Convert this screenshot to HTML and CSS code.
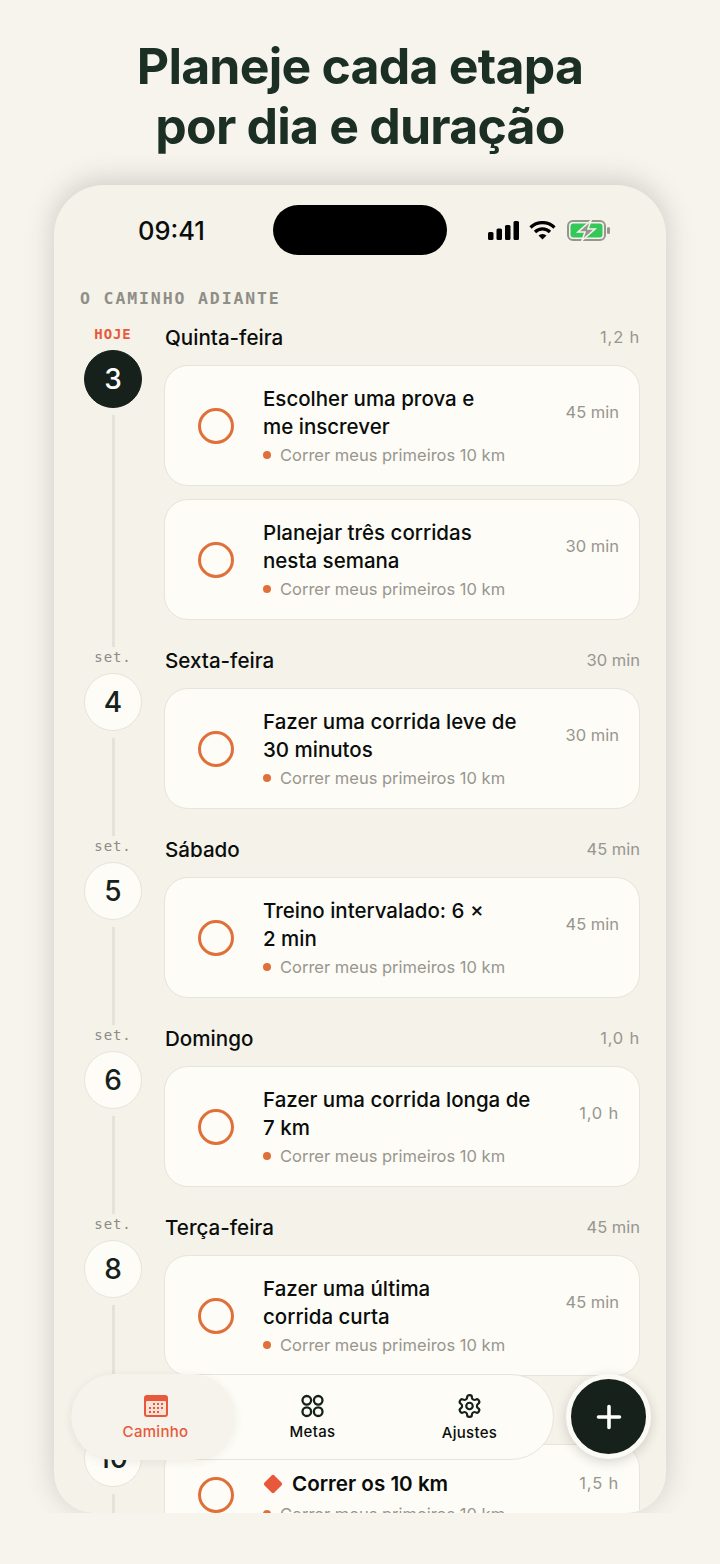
FILE: index.html
```html
<!DOCTYPE html>
<html lang="pt-BR">
<head>
    <meta charset="UTF-8">
    <meta name="viewport" content="width=device-width, initial-scale=1.0">
    <title>Planeje cada etapa</title>
    <link rel="stylesheet" href="styles.css">
</head>
<body>
    <h1 class="headline">Planeje cada etapa<br>por dia e duração</h1>

    <div class="phone">
        <div class="status-bar">
            <div class="status-time">09:41</div>
            <div class="island"></div>
            <div class="status-icons">
                <svg width="32" height="19" viewBox="0 0 32 19" fill="#000">
                    <rect x="0" y="11" width="5.500" height="8" rx="1.500"/>
                    <rect x="8.500" y="7.500" width="5.500" height="11.500" rx="1.500"/>
                    <rect x="17" y="4" width="5.500" height="15" rx="1.500"/>
                    <rect x="25.500" y="0" width="5.500" height="19" rx="1.500"/>
                </svg>
                <svg class="wifi" width="27" height="19" viewBox="0 0 27 19" fill="none" stroke="#000" stroke-width="3.200">
                    <path d="M1.500 6.500a17 17 0 0 1 24 0"/>
                    <path d="M6 11a10.600 10.600 0 0 1 15 0"/>
                    <path d="M13.500 18.600l-4-4a5.600 5.600 0 0 1 8 0z" fill="#000" stroke="none"/>
                </svg>
                <svg class="battery" width="44" height="21" viewBox="0 0 44 21">
                    <rect x="1" y="1" width="37" height="19" rx="5" fill="none" stroke="#97968e" stroke-width="2"/>
                    <rect x="3.500" y="3.500" width="32" height="14" rx="3" fill="#34c759"/>
                    <rect x="40" y="7" width="3" height="7" rx="1.500" fill="#97968e"/>
                    <path d="M24 0.500L11 12h7l-3 8.500L28 9h-7z" fill="#97968e" stroke="#f4f2e9" stroke-width="1.600"/>
                </svg>
            </div>
        </div>

        <div class="section-label">O CAMINHO ADIANTE</div>

        <div class="timeline">
            <div class="day">
                <div class="day-rail">
                    <div class="day-month today">HOJE</div>
                    <div class="day-number current">3</div>
                    <div class="rail-line"></div>
                </div>
                <div class="day-main">
                    <div class="day-head"><span class="day-name">Quinta-feira</span><span class="meta hours">1,2 h</span></div>
                    <div class="card">
                        <div class="check"></div>
                        <div class="card-body">
                            <div class="card-top"><div class="card-title">Escolher uma prova e<br>me inscrever</div><span class="meta card-time">45 min</span></div>
                            <div class="card-goal"><i class="goal-dot"></i>Correr meus primeiros 10 km</div>
                        </div>
                    </div>
                    <div class="card">
                        <div class="check"></div>
                        <div class="card-body">
                            <div class="card-top"><div class="card-title">Planejar três corridas<br>nesta semana</div><span class="meta card-time">30 min</span></div>
                            <div class="card-goal"><i class="goal-dot"></i>Correr meus primeiros 10 km</div>
                        </div>
                    </div>
                </div>
            </div>

            <div class="day">
                <div class="day-rail">
                    <div class="day-month">set.</div>
                    <div class="day-number">4</div>
                    <div class="rail-line"></div>
                </div>
                <div class="day-main">
                    <div class="day-head"><span class="day-name">Sexta-feira</span><span class="meta">30 min</span></div>
                    <div class="card">
                        <div class="check"></div>
                        <div class="card-body">
                            <div class="card-top"><div class="card-title">Fazer uma corrida leve de<br>30 minutos</div><span class="meta card-time">30 min</span></div>
                            <div class="card-goal"><i class="goal-dot"></i>Correr meus primeiros 10 km</div>
                        </div>
                    </div>
                </div>
            </div>

            <div class="day">
                <div class="day-rail">
                    <div class="day-month">set.</div>
                    <div class="day-number">5</div>
                    <div class="rail-line"></div>
                </div>
                <div class="day-main">
                    <div class="day-head"><span class="day-name">Sábado</span><span class="meta">45 min</span></div>
                    <div class="card">
                        <div class="check"></div>
                        <div class="card-body">
                            <div class="card-top"><div class="card-title">Treino intervalado: 6 ×<br>2 min</div><span class="meta card-time">45 min</span></div>
                            <div class="card-goal"><i class="goal-dot"></i>Correr meus primeiros 10 km</div>
                        </div>
                    </div>
                </div>
            </div>

            <div class="day">
                <div class="day-rail">
                    <div class="day-month">set.</div>
                    <div class="day-number">6</div>
                    <div class="rail-line"></div>
                </div>
                <div class="day-main">
                    <div class="day-head"><span class="day-name">Domingo</span><span class="meta hours">1,0 h</span></div>
                    <div class="card">
                        <div class="check"></div>
                        <div class="card-body">
                            <div class="card-top"><div class="card-title">Fazer uma corrida longa de<br>7 km</div><span class="meta card-time hours">1,0 h</span></div>
                            <div class="card-goal"><i class="goal-dot"></i>Correr meus primeiros 10 km</div>
                        </div>
                    </div>
                </div>
            </div>

            <div class="day">
                <div class="day-rail">
                    <div class="day-month">set.</div>
                    <div class="day-number">8</div>
                    <div class="rail-line"></div>
                </div>
                <div class="day-main">
                    <div class="day-head"><span class="day-name">Terça-feira</span><span class="meta">45 min</span></div>
                    <div class="card">
                        <div class="check"></div>
                        <div class="card-body">
                            <div class="card-top"><div class="card-title">Fazer uma última<br>corrida curta</div><span class="meta card-time">45 min</span></div>
                            <div class="card-goal"><i class="goal-dot"></i>Correr meus primeiros 10 km</div>
                        </div>
                    </div>
                </div>
            </div>

            <!-- month label and day head sit behind the tab bar -->
            <div class="day">
                <div class="day-rail">
                    <div class="day-month"></div>
                    <div class="day-number">10</div>
                    <div class="rail-line"></div>
                </div>
                <div class="day-main">
                    <div class="day-head"></div>
                    <div class="card card-milestone">
                        <div class="check"></div>
                        <div class="card-body">
                            <div class="card-top"><div class="card-title"><i class="diamond"></i>Correr os 10 km</div><span class="meta card-time hours">1,5 h</span></div>
                            <div class="card-goal"><i class="goal-dot"></i>Correr meus primeiros 10 km</div>
                        </div>
                    </div>
                </div>
            </div>
        </div>

        <nav class="tab-bar">
            <div class="tab active">
                <svg width="26" height="24" viewBox="0 0 26 24">
                    <rect x="1" y="1" width="24" height="22" rx="3" fill="#e8583a"/>
                    <rect x="3" y="7" width="20" height="14" rx="1" fill="#f8e3d8"/>
                    <g fill="#e8583a">
                        <rect x="10" y="9" width="2" height="2"/><rect x="14" y="9" width="2" height="2"/><rect x="18" y="9" width="2" height="2"/>
                        <rect x="6" y="13" width="2" height="2"/><rect x="10" y="13" width="2" height="2"/><rect x="14" y="13" width="2" height="2"/><rect x="18" y="13" width="2" height="2"/>
                        <rect x="6" y="17" width="2" height="2"/><rect x="10" y="17" width="2" height="2"/><rect x="14" y="17" width="2" height="2"/>
                    </g>
                </svg>
                <span>Caminho</span>
            </div>
            <div class="tab">
                <svg width="23" height="23" viewBox="0 0 23 23" fill="none" stroke="#14201a" stroke-width="2.300">
                    <circle cx="5.800" cy="5.800" r="4.300"/><circle cx="17.200" cy="5.800" r="4.300"/>
                    <circle cx="5.800" cy="17.200" r="4.300"/><circle cx="17.200" cy="17.200" r="4.300"/>
                </svg>
                <span>Metas</span>
            </div>
            <div class="tab">
                <svg width="27" height="27" viewBox="0 0 24 24" fill="none" stroke="#14201a" stroke-width="2" stroke-linejoin="round">
                    <path d="M12.220 2h-.44a2 2 0 0 0-2 2v.18a2 2 0 0 1-1 1.730l-.43.25a2 2 0 0 1-2 0l-.15-.08a2 2 0 0 0-2.730.73l-.22.38a2 2 0 0 0 .73 2.730l.15.1a2 2 0 0 1 1 1.720v.51a2 2 0 0 1-1 1.740l-.15.09a2 2 0 0 0-.73 2.730l.22.38a2 2 0 0 0 2.730.73l.15-.08a2 2 0 0 1 2 0l.43.25a2 2 0 0 1 1 1.730V20a2 2 0 0 0 2 2h.44a2 2 0 0 0 2-2v-.18a2 2 0 0 1 1-1.730l.43-.25a2 2 0 0 1 2 0l.15.08a2 2 0 0 0 2.730-.73l.22-.39a2 2 0 0 0-.73-2.730l-.15-.08a2 2 0 0 1-1-1.740v-.5a2 2 0 0 1 1-1.740l.15-.09a2 2 0 0 0 .73-2.730l-.22-.38a2 2 0 0 0-2.730-.73l-.15.08a2 2 0 0 1-2 0l-.43-.25a2 2 0 0 1-1-1.730V4a2 2 0 0 0-2-2z"/>
                    <circle cx="12" cy="12" r="3"/>
                </svg>
                <span>Ajustes</span>
            </div>
        </nav>

        <div class="fab">
            <svg width="26" height="26" viewBox="0 0 26 26" stroke="#fff" stroke-width="3.600" stroke-linecap="round">
                <path d="M13 2.500v21M2.500 13h21"/>
            </svg>
        </div>
    </div>
</body>
</html>
```

FILE: styles.css
```css
:root {
    --page: #f7f4ee;
    --phone: #f4f2e9;
    --card: #fdfcf6;
    --line: #e7e4d9;
    --ink: #0a0d0b;
    --dark: #16211b;
    --muted: #98968e;
    --orange: #e0703a;
    --red: #e8583a;
}

* {
    margin: 0;
    padding: 0;
    box-sizing: border-box;
}

body {
    width: 720px;
    height: 1564px;
    overflow: hidden;
    background: var(--page);
    font-family: 'Inter', sans-serif;
    color: var(--ink);
}

.headline {
    height: 185px;
    padding-top: 36px;
    font-size: 50px;
    line-height: 60px;
    font-weight: 700;
    letter-spacing: -0.8px;
    text-align: center;
    color: #1b2f24;
}

.phone {
    position: relative;
    width: 612px;
    height: 1328px;
    margin-left: 54px;
    overflow: hidden;
    background: var(--phone);
    border-radius: 50px 50px 40px 40px;
    box-shadow: 0 -4px 28px rgba(60, 55, 40, 0.22);
    clip-path: inset(-40px -40px 0 -40px);
}

.status-bar {
    display: grid;
    grid-template-columns: 219px 174px 1fr;
    height: 70px;
    padding-top: 20px;
}

.status-time {
    padding-left: 84px;
    font-size: 25.500px;
    line-height: 52px;
    font-weight: 500;
}

.island {
    height: 50px;
    background: #000;
    border-radius: 25px;
}

.status-icons {
    display: flex;
    align-items: center;
    padding-left: 41px;
    height: 50px;
}

.wifi {
    margin-left: 9px;
}

.battery {
    margin-left: 11px;
}

.section-label {
    margin: 33px 0 14px 26px;
    font-family: 'DejaVu Sans Mono', monospace;
    font-size: 16.500px;
    line-height: 22px;
    font-weight: 700;
    letter-spacing: 1.870px;
    color: #8f8e87;
}

.timeline {
    padding: 0 26px 0 30px;
}

.day {
    display: flex;
}

.day-rail {
    display: flex;
    flex-direction: column;
    align-items: center;
    flex: none;
    width: 58px;
    margin-right: 22px;
}

.day-month {
    height: 26px;
    padding-top: 2px;
    font-family: 'DejaVu Sans Mono', monospace;
    font-size: 14px;
    line-height: 17px;
    letter-spacing: 0.900px;
    color: #8c8b84;
}

.day-month.today {
    font-weight: 700;
    color: var(--red);
}

.day-number {
    display: flex;
    justify-content: center;
    align-items: center;
    flex: none;
    width: 58px;
    height: 58px;
    background: var(--card);
    border: 1px solid var(--line);
    border-radius: 50%;
    font-size: 28px;
    font-weight: 550;
    color: var(--dark);
}

.day-number.current {
    background: var(--dark);
    border-color: var(--dark);
    color: #fff;
    font-weight: 500;
}

.rail-line {
    flex: 1;
    width: 3px;
    margin-top: 7px;
    background: #e4e2d9;
}

.day-main {
    flex: 1;
    min-width: 0;
    padding-bottom: 14px;
}

.day-head {
    display: flex;
    justify-content: space-between;
    align-items: center;
    height: 26px;
    margin-bottom: 15px;
}

.day-name {
    padding-left: 1px;
    font-size: 20.600px;
    font-weight: 500;
}

.meta {
    font-size: 16.500px;
    color: var(--muted);
}

.hours {
    letter-spacing: 0.800px;
}

.card {
    display: flex;
    align-items: center;
    margin-bottom: 13px;
    padding: 19px 20px 19px 33px;
    background: var(--card);
    border: 1px solid var(--line);
    border-radius: 24px;
}

.check {
    flex: none;
    width: 36px;
    height: 36px;
    margin-right: 29px;
    border: 3px solid var(--orange);
    border-radius: 50%;
}

.card-body {
    flex: 1;
    min-width: 0;
}

.card-top {
    display: flex;
    justify-content: space-between;
    align-items: center;
    margin-bottom: 3px;
}

.card-time {
    margin-top: -2px;
}

.card-title {
    font-size: 20.500px;
    line-height: 28px;
    font-weight: 500;
}

.card-goal {
    display: flex;
    align-items: center;
    font-size: 16.500px;
    line-height: 22px;
    color: var(--muted);
}

.goal-dot {
    flex: none;
    width: 8px;
    height: 8px;
    margin-right: 9px;
    background: var(--orange);
    border-radius: 50%;
}

.card-milestone {
    padding: 20px 20px 26px 33px;
}

.card-milestone .card-top {
    margin-bottom: 0;
}

.card-milestone .card-title {
    display: flex;
    align-items: center;
    font-size: 20.600px;
    line-height: 38px;
    font-weight: 600;
}

.diamond {
    width: 14px;
    height: 14px;
    margin: 0 12px 0 3px;
    background: var(--red);
    border-radius: 2px;
    transform: rotate(45deg);
}

.tab-bar {
    position: absolute;
    left: 17px;
    top: 1189px;
    display: flex;
    width: 483px;
    height: 86px;
    padding: 0 5px;
    background: var(--card);
    border: 1px solid var(--line);
    border-radius: 43px;
}

.tab {
    position: relative;
    display: flex;
    flex-direction: column;
    align-items: center;
    flex: 1;
    padding-top: 18px;
    font-size: 15px;
    font-weight: 500;
    letter-spacing: 0.300px;
}

.tab svg, .tab span {
    position: relative;
}

.tab svg {
    height: 26px;
    margin-bottom: 3px;
}

.tab:last-child svg {
    margin-bottom: 4px;
}

.tab.active {
    color: var(--red);
}

.tab.active::before {
    content: '';
    position: absolute;
    left: -6px;
    top: -1px;
    width: 164px;
    height: 86px;
    background: #f5f3ec;
    border-radius: 43px;
    box-shadow: 0 2px 10px rgba(60, 55, 40, 0.08);
}

.fab {
    position: absolute;
    left: 512px;
    top: 1189px;
    display: flex;
    justify-content: center;
    align-items: center;
    width: 85px;
    height: 85px;
    background: var(--dark);
    border: 5px solid #fbfaf4;
    border-radius: 50%;
    box-shadow: 0 3px 12px rgba(40, 35, 25, 0.18);
}
```
